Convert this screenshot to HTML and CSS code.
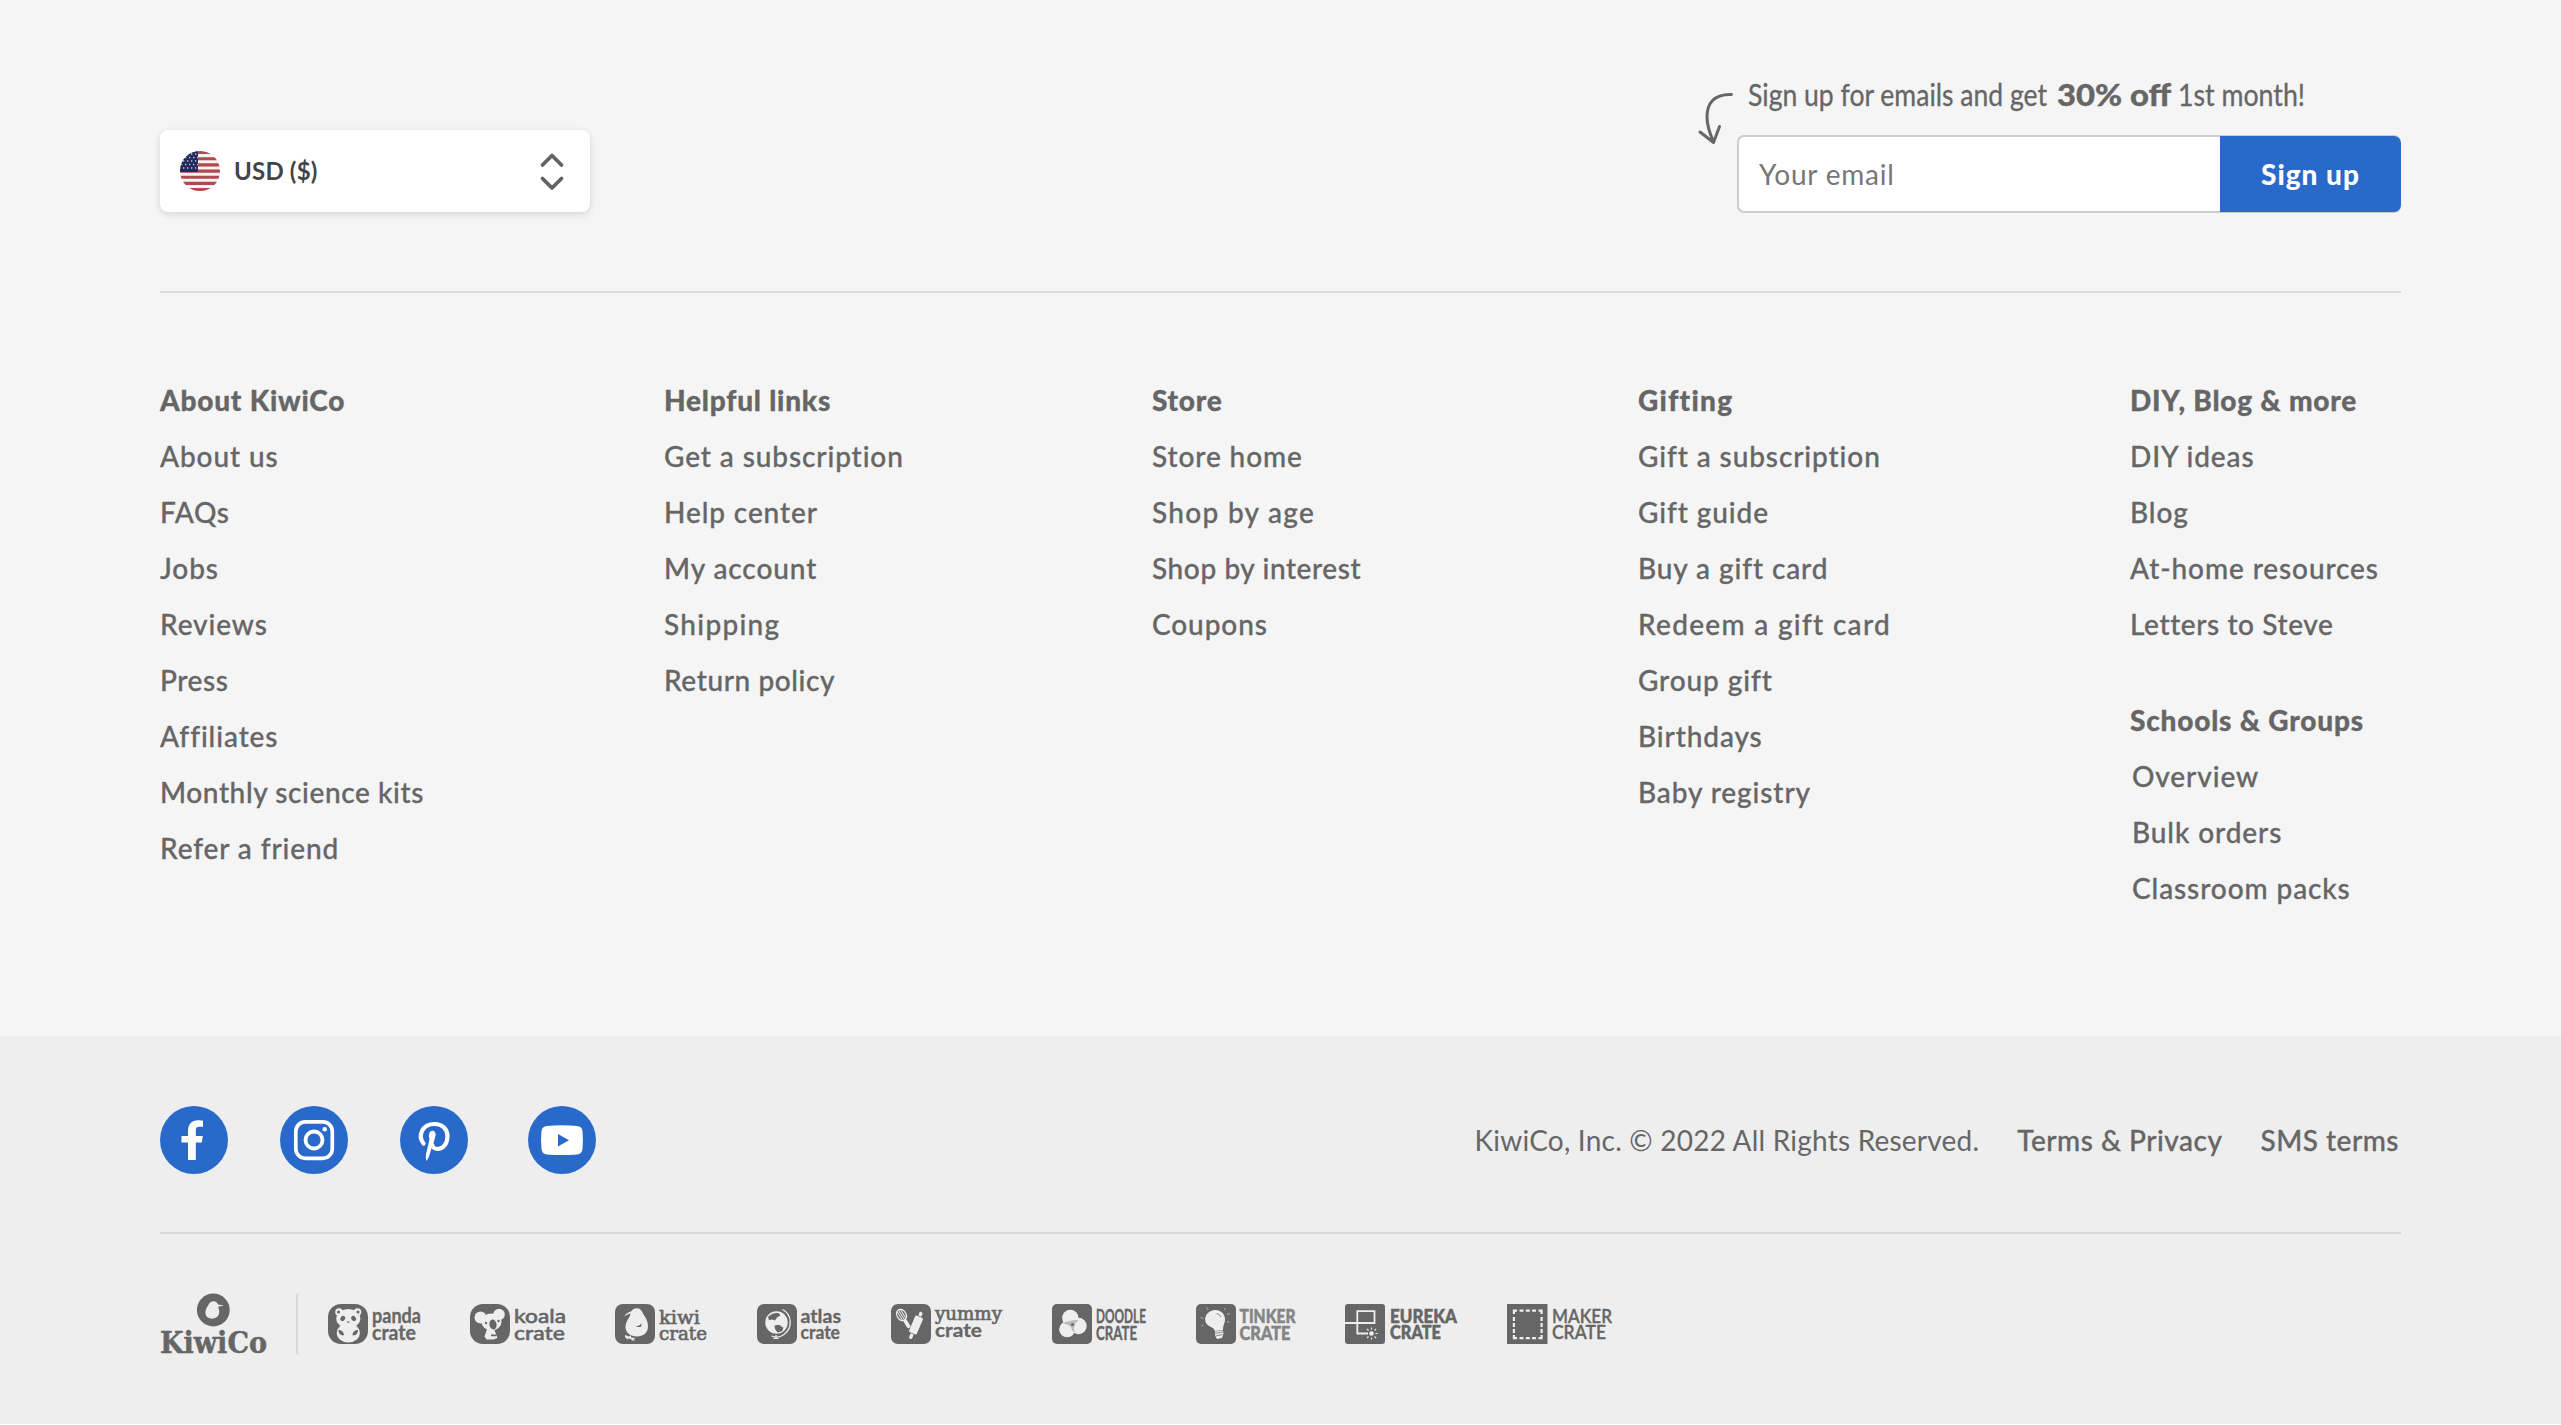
FILE: index.html
```html
<!DOCTYPE html>
<html lang="en">
<head>
<meta charset="utf-8">
<title>KiwiCo</title>
<link rel="stylesheet" href="styles.css">
</head>
<body>
<footer class="footer">
  <div class="footer-main">
    <div class="topbar">
      <div class="currency">
        <svg class="flag" viewBox="0 0 40 40">
          <defs><clipPath id="flag-clip"><circle cx="20" cy="20" r="20"/></clipPath></defs>
          <g clip-path="url(#flag-clip)">
            <rect width="40" height="40" fill="#f7f3f3"/>
            <path d="M0 1.5h40M0 7.7h40M0 13.9h40M0 20.1h40M0 26.2h40M0 32.4h40M0 38.5h40" stroke="#b0484c" stroke-width="3.1"/>
            <rect width="18" height="21" fill="#212a5c"/>
            <path d="M3 3h15M1 6.500h17M3 10h15M1 13.500h17M3 17h15" stroke="#c9cde0" stroke-width="1.3" stroke-dasharray="1.3 2.700"/>
          </g>
        </svg>
        <span class="currency-label">USD ($)</span>
        <svg class="chevrons" viewBox="0 0 24 40"><path d="M2.500 14 12 4.500 21.500 14M2.500 27.500 12 37l9.500-9.500" fill="none" stroke="#636363" stroke-width="3.800" stroke-linecap="round" stroke-linejoin="round"/></svg>
      </div>
      <div class="signup">
        <svg class="signup-note" viewBox="0 0 704 64">
          <path d="M34.500 23.500C16 23 10 33 10 46c0 9 3 17 6.500 25M3 61l13.500 10.500L22.500 55.500" fill="none" stroke="#666" stroke-width="3" stroke-linecap="round" stroke-linejoin="round"/>
          <text x="51" y="35" textLength="299" lengthAdjust="spacingAndGlyphs">Sign up for emails and get</text>
          <text class="note-strong" x="360" y="35" textLength="114" lengthAdjust="spacingAndGlyphs">30% off</text>
          <text x="481" y="35" textLength="127" lengthAdjust="spacingAndGlyphs">1st month!</text>
        </svg>
        <div class="signup-form">
          <div class="signup-input">Your email</div>
          <div class="signup-button">Sign up</div>
        </div>
      </div>
    </div>
    <div class="links">
      <div class="col">
        <h3>About KiwiCo</h3>
        <a>About us</a><a class="tight">FAQs</a><a>Jobs</a><a>Reviews</a><a class="tight">Press</a><a>Affiliates</a><a class="tight">Monthly science kits</a><a>Refer a friend</a>
      </div>
      <div class="col">
        <h3>Helpful links</h3>
        <a>Get a subscription</a><a>Help center</a><a>My account</a><a class="wide">Shipping</a><a class="tight">Return policy</a>
      </div>
      <div class="col">
        <h3>Store</h3>
        <a>Store home</a><a class="wide">Shop by age</a><a class="tight">Shop by interest</a><a>Coupons</a>
      </div>
      <div class="col">
        <h3 class="wide">Gifting</h3>
        <a>Gift a subscription</a><a>Gift guide</a><a>Buy a gift card</a><a class="wide">Redeem a gift card</a><a>Group gift</a><a>Birthdays</a><a>Baby registry</a>
      </div>
      <div class="col">
        <h3>DIY, Blog &amp; more</h3>
        <a>DIY ideas</a><a>Blog</a><a>At-home resources</a><a class="tight">Letters to Steve</a>
        <h3 class="second">Schools &amp; Groups</h3>
        <a class="inset">Overview</a><a class="inset">Bulk orders</a><a class="inset">Classroom packs</a>
      </div>
    </div>
  </div>
  <div class="footer-base">
    <div class="legal">
      <div class="social">
        <svg viewBox="0 0 68 68"><circle cx="34" cy="34" r="34"/><path fill="#fff" d="M28 54V36.500h-6.500v-6.500H28v-4.500C28 18 32 14.300 38 14.300c2 0 4 .2 5 .4v6h-3.500c-3 0-3.700 1.500-3.700 3.800V30h7l-1 6.500h-6V54z"/></svg>
        <svg viewBox="0 0 68 68"><circle cx="34" cy="34" r="34"/><g fill="none" stroke="#fff"><rect x="15.800" y="15.800" width="36.500" height="36.500" rx="9.500" stroke-width="3.700"/><circle cx="34" cy="34" r="8.500" stroke-width="3.800"/></g><circle class="dot" cx="44.700" cy="23.300" r="2.300"/></svg>
        <svg viewBox="0 0 68 68"><circle cx="34" cy="34" r="34"/><path fill="none" stroke="#fff" stroke-linecap="round" d="M23.500 37.500C17.500 30 22 18 34.500 18c8 0 13 5.500 13 12 0 8-4.500 13-10 13-3 0-5-2-5.300-4" stroke-width="4.200"/><path fill="#fff" d="M29.500 27c1-3.500 7-3 6 2.500-.9 5-3 10-5 16-1 3.500-2 7-4 9.500-1.500-4 0-9 1-13l2-9c-1-2-.7-4 0-6z"/></svg>
        <svg viewBox="0 0 68 68"><circle cx="34" cy="34" r="34"/><path fill="#fff" d="M19 20q15-1.600 30 0 5 .5 5.500 5 .9 9 0 18-.5 5-5.500 5.500-15 1.200-30 0-5-.5-5.500-5.500-.9-9 0-18 .5-4.500 5.500-5z"/><path d="m30 28 11 6.200L30 40.500z"/></svg>
      </div>
      <div class="legal-text">
        <span class="copy">KiwiCo, Inc. © 2022 All Rights Reserved.</span><a>Terms &amp; Privacy</a><a>SMS terms</a>
      </div>
    </div>
    <div class="brands">
      <svg class="kiwico" viewBox="0 0 108 60">
        <circle cx="53.300" cy="16" r="16.400"/>
        <path class="lt" d="M48.500 11c1.500-4.500 8-5 9.500-.5l6 1-6 1.200c2 4 2.500 11-5.500 12-8 0-9-7.500-4-13.700z"/>
        <text class="slab" font-size="29" x="0" y="59.300" textLength="107" lengthAdjust="spacingAndGlyphs">KiwiCo</text>
      </svg>
      <div class="crates">
        <svg class="crate" width="93" height="60" viewBox="0 0 93 60">
          <g transform="translate(0 10)"><rect width="40" height="40" rx="13"/>
            <g class="lt"><circle cx="11" cy="8" r="3.800"/><circle cx="29.500" cy="8" r="3.800"/><ellipse cx="20.300" cy="29" rx="11.500" ry="9.500"/><ellipse cx="20.300" cy="14.500" rx="12" ry="9.500"/></g>
            <circle cx="10.500" cy="8" r="1.500"/><circle cx="30" cy="8" r="1.500"/>
            <ellipse cx="14.800" cy="14.500" rx="2.200" ry="2.800" transform="rotate(35 14.800 14.500)"/><ellipse cx="25.600" cy="14.500" rx="2.200" ry="2.800" transform="rotate(-35 25.600 14.500)"/>
            <path d="M18.500 17.500h3.500l-1.700 1.800zM10.500 26c3 0 5.500 2 5.500 5l-1 .5c-2.500-.5-4.500-2-4.500-5.500zM30 26c-3 0-5.500 2-5.500 5l1 .5c2.500-.5 4.500-2 4.500-5.500z"/></g>
          <text class="round" font-size="20" x="44" y="28.700" textLength="49" lengthAdjust="spacingAndGlyphs">panda</text>
          <text class="round" font-size="20" x="44" y="45.700" textLength="44" lengthAdjust="spacingAndGlyphs">crate</text>
        </svg>
        <svg class="crate" width="96" height="60" viewBox="0 0 96 60">
          <g transform="translate(0 10)"><rect width="40" height="40" rx="13"/>
            <g class="lt"><circle cx="10.500" cy="13.500" r="6"/><circle cx="29" cy="10.500" r="5.800"/><ellipse cx="21.500" cy="18" rx="10" ry="8.500"/><path d="M17 25h7l2 5 1.500 4-4 1.500h-7l-2-3z"/></g>
            <ellipse cx="23" cy="20.500" rx="3.600" ry="5" transform="rotate(-8 23 20.500)"/><circle cx="16" cy="19" r="1.200"/><circle cx="28.500" cy="17" r="1.200"/>
            <path d="M21 30.500h6l-1 1.800h-5z"/></g>
          <text class="round thin" font-size="20" x="44" y="28.700" textLength="52" lengthAdjust="spacingAndGlyphs">koala</text>
          <text class="round thin" font-size="20" x="44" y="45.700" textLength="51" lengthAdjust="spacingAndGlyphs">crate</text>
        </svg>
        <svg class="crate" width="93" height="60" viewBox="0 0 93 60">
          <g transform="translate(0 10)"><rect width="40" height="40" rx="8"/>
            <path class="lt" d="M9 12.500c2-3 4.500-4.500 7-5C18.500 3 25 3 27 7.500c2 4.500 6 8 6 15C33 29 28 32.500 22 32.500S10.500 29 10.500 23c0-6 4-8 5-13.500-2.500.5-4.500 1.500-6.500 3zM10 31l4 1.500 2-1.500v2.500l5 .5-2.500 1 1.500 1.500h-3L16 35l-3-.5-.5 1L10 33z"/>
            <path d="M20.500 21.500c2 1 4 .8 6-2.500l-.2 3.500c-2 1-4.500.8-5.800-1z"/></g>
          <text class="slab soft" font-size="19" x="44" y="30" textLength="41" lengthAdjust="spacingAndGlyphs">kiwi</text>
          <text class="slab soft" font-size="19" x="44" y="46" textLength="48" lengthAdjust="spacingAndGlyphs">crate</text>
        </svg>
        <svg class="crate" width="85" height="60" viewBox="0 0 85 60">
          <g transform="translate(0 10)"><rect width="40" height="40" rx="7"/>
            <circle class="lt" cx="19.500" cy="18.500" r="11.200"/>
            <path d="M25.500 5.500C35 10 36 24 27 30.500c-4 3-9 3-12.500 1.500M19 31v3" fill="none" stroke="#eee" stroke-width="1.300"/><path class="lt" d="M15.500 35q3.500-2.500 7 0z"/>
            <path d="M11 13c3-3.500 7-4.500 10.500-4l2 2.500-3.500 2-2 3-3-1-3 .5zM17.500 21.500l4.500-.8 4.500 3-1.500 3.500-4.500 1.300-2.500-3.500z"/></g>
          <text class="round" font-size="19" x="43.500" y="28.500" textLength="40.500" lengthAdjust="spacingAndGlyphs">atlas</text>
          <text class="round" font-size="19" x="43.500" y="44.500" textLength="39.500" lengthAdjust="spacingAndGlyphs">crate</text>
        </svg>
        <svg class="crate" width="112" height="60" viewBox="0 0 112 60">
          <g transform="translate(0 10)"><rect width="40" height="40" rx="7"/>
            <g transform="rotate(-32 10.500 11)"><ellipse cx="10.500" cy="11" rx="4.600" ry="6" fill="none" stroke="#eee" stroke-width="1.200"/><path d="M8.500 6v10M10.500 5v12M12.500 6v10" stroke="#eee"/><rect class="lt" x="8.700" y="16.500" width="3.700" height="9.500" rx="1.500"/></g>
            <g class="lt" transform="rotate(23 25 21)"><rect x="20.800" y="12" width="8.400" height="18" rx="1.500"/><rect x="23.300" y="7" width="3.400" height="4.500" rx="1.500"/><rect x="23.300" y="30.500" width="3.400" height="5.500" rx="1.500"/></g></g>
          <text class="slab soft" font-size="18" x="44" y="25.700" textLength="67" lengthAdjust="spacingAndGlyphs">yummy</text>
          <text class="round" font-size="18.500" x="44" y="43" textLength="47" lengthAdjust="spacingAndGlyphs">crate</text>
        </svg>
        <svg class="crate" width="95" height="60" viewBox="0 0 95 60">
          <g transform="translate(0 10)"><rect width="40" height="40" rx="5"/>
            <g class="lt"><circle cx="18.300" cy="14" r="8.200"/><circle cx="26.500" cy="22" r="8.200"/><circle cx="15.200" cy="25.300" r="8"/></g>
            <path d="M18 17c5-1.500 8-1 8.500 0-2 .5-4 3-4 5.500-1 2-1 4 1 6-3-1-4-3-4.500-5-1.500-2-4-3.500-8-4 2-1.500 5-2.500 7-2.500z" fill="#bbb"/><circle cx="20.500" cy="20.500" r="1.500"/></g>
          <text class="bold" font-size="18.500" x="44" y="29" textLength="50" lengthAdjust="spacingAndGlyphs">DOODLE</text>
          <text class="bold" font-size="18.500" x="44" y="46" textLength="41" lengthAdjust="spacingAndGlyphs">CRATE</text>
        </svg>
        <svg class="crate" width="100" height="60" viewBox="0 0 100 60">
          <g transform="translate(0 10)"><rect width="40" height="40" rx="5"/>
            <path class="lt" d="M16.500 6.500c7-2 12.500 3 12.500 9 0 3.500-2 5.500-2 10.500l-8 1c-1-3-3-3.500-6-5C6.500 18 8.500 8.500 16.500 6.500zM19 27.500l8-1 .5 3-1.500 4.500-5 1-2-3.500z"/>
            <path d="M18.500 29.500l8.500-1.500M19.500 32l7-1.500M20.500 9.500q3 .5 4.500 3.500" fill="none" stroke="#888" stroke-width="1"/>
            <path d="M10.500 3.500l1.500 2.500M29.500 4l-1.200 2M31 10.500l3-1M4.500 14h3M5.500 22l2-1M31 18h2.500" fill="none" stroke="#bbb" stroke-width=".9"/></g>
          <text class="heavy mid" font-size="18.500" x="43.500" y="29" textLength="56" lengthAdjust="spacingAndGlyphs">TINKER</text>
          <text class="heavy mid" font-size="18.500" x="43.500" y="45.500" textLength="51" lengthAdjust="spacingAndGlyphs">CRATE</text>
        </svg>
        <svg class="crate" width="113" height="60" viewBox="0 0 113 60">
          <g transform="translate(0 10)"><rect width="40" height="40" rx="3"/>
            <path d="M0 19H29.500V7.200H12.300V29.500H23" fill="none" stroke="#eee" stroke-width="1.800"/><circle class="lt" cx="26.500" cy="29.500" r="2.300"/>
            <path d="M26.500 23.500v2M26.500 33.500v2M30.500 29.500h2M29.500 26.500l1.500-1.500M29.500 32.500l1.500 1.500M23.500 32.500 22 34M23.500 26.500 22 25" stroke="#eee" stroke-width="1.100"/></g>
          <text class="heavy" font-size="18.500" x="45" y="28.700" textLength="67" lengthAdjust="spacingAndGlyphs">EUREKA</text>
          <text class="heavy" font-size="18.500" x="45" y="45.200" textLength="51" lengthAdjust="spacingAndGlyphs">CRATE</text>
        </svg>
        <svg class="crate" width="106" height="60" viewBox="0 0 106 60">
          <g transform="translate(0 10)"><rect width="40.500" height="40"/>
            <path d="M10 6.700H6.900V10M31.500 6.700h3.100V10M10 34.200H6.900V31M31.500 34.200h3.100V31M12.500 6.700h4M18.800 6.700h4M25 6.700h4M12.500 34.200h4M18.800 34.200h4M25 34.200h4M6.900 13v4M6.900 19v4M6.900 25v4M34.600 13v4M34.600 19v4M34.600 25v4" fill="none" stroke="#eee" stroke-width="2.200"/></g>
          <text class="semi" font-size="18.500" x="45" y="28.700" textLength="60" lengthAdjust="spacingAndGlyphs">MAKER</text>
          <text class="semi" font-size="18.500" x="45" y="45.200" textLength="54" lengthAdjust="spacingAndGlyphs">CRATE</text>
        </svg>
      </div>
    </div>
  </div>
</footer>
</body>
</html>
```

FILE: styles.css
```css
* { box-sizing: border-box; }
body { margin: 0; background: #fff; color: #666; font-family: Lato, "Liberation Sans", sans-serif; }
svg { display: block; overflow: visible; }

.footer { height: 1424px; display: flex; flex-direction: column; }
.footer-main { height: 1036px; padding: 0 160px; background: #f5f5f5; }
.footer-base { flex: 1; padding: 0 160px; background: #eee; }

.topbar { height: 293px; padding-top: 71px; display: flex; justify-content: space-between; border-bottom: 2px solid #dadada; }
.currency { width: 430px; height: 82px; margin-top: 59px; padding: 0 26px 0 20px; display: flex; align-items: center; background: #fff; border-radius: 8px; box-shadow: 0 2px 7px rgba(0, 0, 0, .14); }
.flag { width: 40px; height: 40px; }
.currency-label { flex: 1; margin: 0 0 2px 14px; color: #444; font-size: 24px; font-weight: 700; letter-spacing: .2px; }
.chevrons { width: 24px; height: 40px; }

.signup { width: 704px; }
.signup-note { width: 704px; height: 64px; }
.signup-note text { fill: #666; stroke: #666; stroke-width: .3px; font-size: 30px; }
.signup-note .note-strong { font-weight: 900; font-size: 31px; }
.signup-form { display: flex; width: 664px; height: 78px; margin-left: 40px; border: 2px solid #ccc; border-right: 0; border-radius: 7px; background: #fff; }
.signup-input { flex: 1; padding-left: 20px; line-height: 75px; color: #777; font-size: 28px; letter-spacing: .8px; }
.signup-button { width: 181px; margin: -1px 0; line-height: 76px; text-align: center; background: #2969ca; color: #fff; border-radius: 0 7px 7px 0; font-size: 28px; font-weight: 900; letter-spacing: 1px; }

.links { display: grid; grid-template-columns: 504px 488px 486px 492px 1fr; padding-top: 79px; }
.col { display: flex; flex-direction: column; font-size: 28px; font-weight: 500; letter-spacing: .9px; line-height: 56px; white-space: nowrap; -webkit-text-stroke: .3px #666; }
.col h3 { margin: 0; font-size: 28px; font-weight: 900; line-height: 56px; letter-spacing: .8px; }
.col .second { margin-top: 40px; }
.col .inset { padding-left: 2px; }
.col .tight { letter-spacing: .6px; }
.col .wide { letter-spacing: 1.3px; }

.legal { height: 198px; display: flex; justify-content: space-between; align-items: center; padding-top: 12px; border-bottom: 2px solid #d9d9d9; }
.social { display: flex; gap: 52px; }
.social svg { width: 68px; height: 68px; fill: #2969ca; }
.social svg:last-child { margin-left: 8px; }
.social .dot { fill: #fff; }
.legal-text { display: flex; gap: 38px; padding-right: 2px; font-size: 28px; font-weight: 500; letter-spacing: .5px; -webkit-text-stroke: .3px #666; }
.legal-text .copy { font-weight: 400; letter-spacing: .22px; -webkit-text-stroke: 0; }

.brands { display: flex; padding-top: 60px; fill: #666; }
.kiwico { width: 108px; height: 60px; margin-right: 28px; }
.crates { display: flex; gap: 49px; padding-left: 30px; border-left: 2px solid #d9d9d9; }
.lt { fill: #eee; }
.slab { font-family: "DejaVu Serif", serif; font-weight: 700; stroke: #666; stroke-width: .5px; }
.slab.soft { font-weight: 400; stroke-width: .7px; }
.round { font-weight: 700; stroke: #666; stroke-width: .3px; }
.round.thin { font-weight: 500; stroke-width: .5px; }
.bold { font-weight: 700; stroke: #666; stroke-width: .4px; }
.heavy { font-weight: 900; stroke: #666; stroke-width: .5px; }
.semi { font-weight: 600; stroke: #666; stroke-width: .3px; }
.mid { fill: #858585; stroke: #858585; }
```
